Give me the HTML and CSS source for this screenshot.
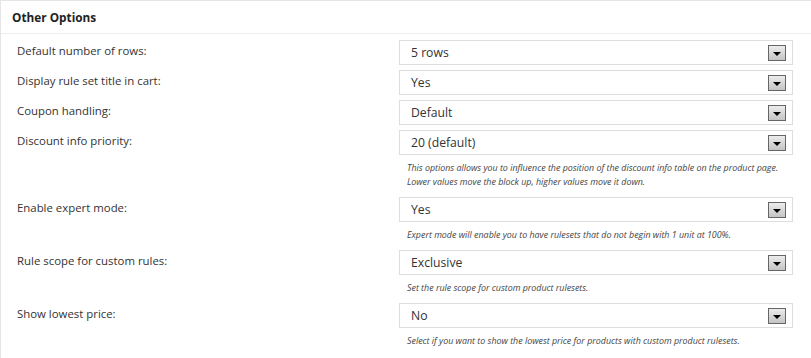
FILE: index.html
```html
<!DOCTYPE html>
<html>
<head>
	<title>Other Options</title>
	<link rel="stylesheet" href="styles.css">
</head>
<body>

<div class="panel">
	<h3 class="titulo">Other Options</h3>
	<div class="opciones">
		<div class="fila">
			<label>Default number of rows:</label>
			<div class="campo">
				<div class="select"><span>5 rows</span><i class="flecha"></i></div>
			</div>
		</div>
		<div class="fila">
			<label>Display rule set title in cart:</label>
			<div class="campo">
				<div class="select"><span>Yes</span><i class="flecha"></i></div>
			</div>
		</div>
		<div class="fila">
			<label>Coupon handling:</label>
			<div class="campo">
				<div class="select"><span>Default</span><i class="flecha"></i></div>
			</div>
		</div>
		<div class="fila">
			<label>Discount info priority:</label>
			<div class="campo">
				<div class="select"><span>20 (default)</span><i class="flecha"></i></div>
				<p class="ayuda">This options allows you to influence the position of the discount info table on the product page.<br>Lower values move the block up, higher values move it down.</p>
			</div>
		</div>
		<div class="fila">
			<label>Enable expert mode:</label>
			<div class="campo">
				<div class="select"><span>Yes</span><i class="flecha"></i></div>
				<p class="ayuda">Expert mode will enable you to have rulesets that do not begin with 1 unit at 100%.</p>
			</div>
		</div>
		<div class="fila">
			<label>Rule scope for custom rules:</label>
			<div class="campo">
				<div class="select"><span>Exclusive</span><i class="flecha"></i></div>
				<p class="ayuda">Set the rule scope for custom product rulesets.</p>
			</div>
		</div>
		<div class="fila">
			<label>Show lowest price:</label>
			<div class="campo">
				<div class="select"><span>No</span><i class="flecha"></i></div>
				<p class="ayuda">Select if you want to show the lowest price for products with custom product rulesets.</p>
			</div>
		</div>
	</div>
</div>

</body>
</html>
```

FILE: styles.css
```css
html, body {
	margin: 0;
	padding: 0;
	background: #fff;
}

body {
	font-family: "Open Sans", "Noto Sans", sans-serif;
	color: #333;
}

div.panel {
	width: 830px;
	min-height: 100vh;
	border: 1px solid #e5e5e5;
	border-right: none;
	border-bottom: none;
	box-sizing: border-box;
}

h3.titulo {
	margin: 0;
	padding: 7px 11px 6px;
	font-size: 11.8px;
	line-height: 19px;
	font-weight: bold;
	color: #222;
	border-bottom: 1px solid #eee;
}

div.opciones {
	padding: 6px 0 0 16px;
}

div.fila {
	display: grid;
	grid-template-columns: 382px 394px;
	margin-bottom: 5px;
}

div.fila label {
	font-size: 11.4px;
	line-height: 17px;
	padding-top: 2px;
	color: #333;
}

div.select {
	height: 25px;
	border: 1px solid #ddd;
	box-sizing: border-box;
	display: flex;
	align-items: center;
	justify-content: space-between;
	padding: 0 6px 0 11px;
	font-size: 12.2px;
	color: #333;
}

i.flecha {
	width: 18px;
	height: 16px;
	box-sizing: border-box;
	border: 1px solid #666;
	background: linear-gradient(#ececec, #c4c4c4);
	position: relative;
}

i.flecha::after {
	content: "";
	position: absolute;
	left: 4px;
	top: 6px;
	border-left: 4px solid transparent;
	border-right: 4px solid transparent;
	border-top: 4px solid #000;
}

p.ayuda {
	margin: 6px 0 3px 8px;
	font-size: 8.9px;
	line-height: 14px;
	font-style: italic;
	white-space: nowrap;
	color: #444;
}
```
